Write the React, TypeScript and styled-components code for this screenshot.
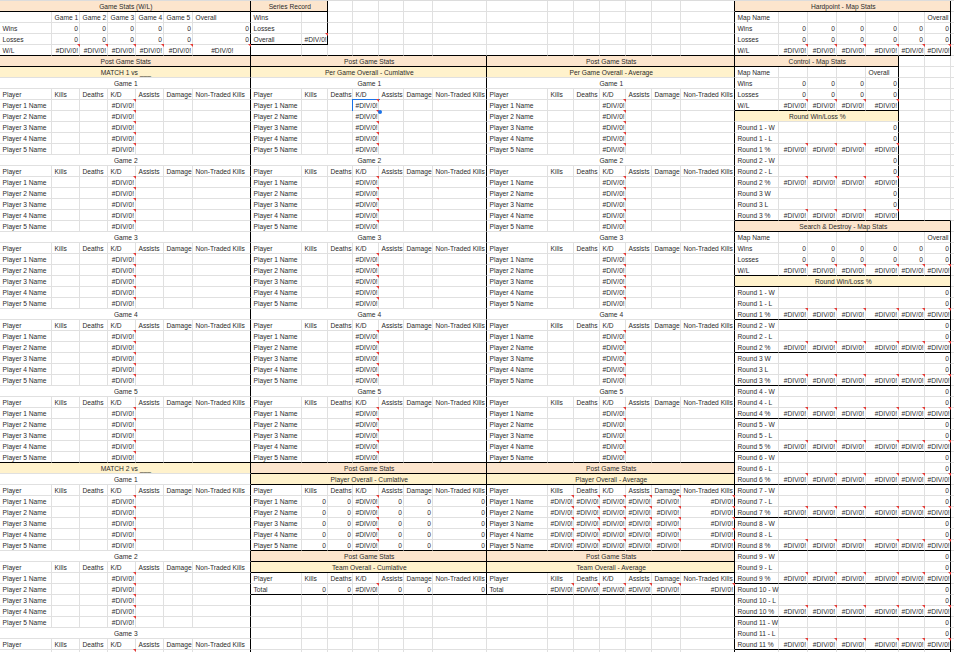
import styled, { createGlobalStyle } from "styled-components";

type Fill = "peach" | "cream";
type Align = "left" | "center" | "right";

type CellDef = {
  text?: string;
  span?: number;
  align?: Align;
  fill?: Fill;
  selected?: boolean;
};

const DIV = "#DIV/0!";
const ROW_COUNT = 60;
const COL_WIDTHS = [52, 28, 28, 28, 28, 29, 58, 51, 26, 25, 26, 25, 29, 54, 61, 26, 26, 26, 26, 29, 54, 44, 29, 29, 29, 33, 26, 26, 30];
const FILLS = { peach: "#fce5cd", cream: "#fff2cc" };

const grid: (CellDef | null)[][] = Array.from({ length: ROW_COUNT }, () =>
  COL_WIDTHS.map(() => ({}))
);

const put = (row: number, col: number, def: CellDef) => {
  // the last game block runs past the bottom of the window
  if (row >= ROW_COUNT) return;
  grid[row][col] = def;
  for (let i = 1; i < (def.span ?? 1); i++) grid[row][col + i] = null;
};

const title = (row: number, col: number, span: number, text: string, fill?: Fill) =>
  put(row, col, { text, span, fill, align: "center" });

const STAT_HEADERS = ["Kills", "Deaths", "K/D", "Assists", "Damage", "Non-Traded Kills"];

const statHeader = (row: number, col: number) => {
  put(row, col, { text: "Player" });
  STAT_HEADERS.forEach((text, i) => put(row, col + 1 + i, { text }));
};

const right = (row: number, col: number, text: string) => put(row, col, { text, align: "right" });

// one "Game n" block: title, header row and five players with only K/D filled in
const gameBlock = (row: number, col: number, game: number) => {
  title(row, col, 7, `Game ${game}`);
  statHeader(row + 1, col);
  for (let p = 1; p <= 5; p++) {
    put(row + 1 + p, col, { text: `Player ${p} Name` });
    right(row + 1 + p, col + 3, DIV);
  }
};

const summaryRow = (row: number, col: number, label: string, average: boolean) => {
  put(row, col, { text: label });
  for (let i = 1; i <= 6; i++) {
    right(row, col + i, average || i === 3 ? DIV : "0");
  }
};

const mapStats = (row: number, count: number) => {
  put(row, 21, { text: "Map Name" });
  put(row, 21 + count, { text: "Overall" });
  ["Wins", "Losses", "W/L"].forEach((label, i) => {
    put(row + 1 + i, 21, { text: label });
    for (let c = 1; c <= count; c++) right(row + 1 + i, 21 + c, i === 2 ? DIV : "0");
  });
};

const roundRows = (row: number, round: number, count: number, plain: boolean) => {
  const dash = plain ? " " : " - ";
  put(row, 21, { text: `Round ${round}${dash}W` });
  right(row, 21 + count, "0");
  put(row + 1, 21, { text: `Round ${round}${dash}L` });
  right(row + 1, 21 + count, "0");
  put(row + 2, 21, { text: `Round ${round} %` });
  for (let c = 1; c <= count; c++) right(row + 2, 21 + c, DIV);
};

// top summary
title(0, 0, 7, "Game Stats (W/L)", "peach");
title(0, 7, 2, "Series Record", "peach");
[1, 2, 3, 4, 5].forEach((g) => put(1, g, { text: `Game ${g}` }));
put(1, 6, { text: "Overall" });
["Wins", "Losses"].forEach((label, i) => {
  put(2 + i, 0, { text: label });
  for (let c = 1; c <= 6; c++) right(2 + i, c, "0");
});
put(4, 0, { text: "W/L" });
for (let c = 1; c <= 5; c++) right(4, c, DIV);
put(4, 6, { text: DIV, align: "center" });
put(1, 7, { text: "Wins" });
put(2, 7, { text: "Losses" });
put(3, 7, { text: "Overall" });
right(3, 8, DIV);

// three stat columns
title(5, 0, 7, "Post Game Stats", "peach");
title(5, 7, 7, "Post Game Stats", "peach");
title(5, 14, 7, "Post Game Stats", "peach");
title(6, 0, 7, "MATCH 1 vs ___", "cream");
title(6, 7, 7, "Per Game Overall - Cumlative", "cream");
title(6, 14, 7, "Per Game Overall - Average", "cream");
[0, 7, 14].forEach((col) => {
  [1, 2, 3, 4, 5].forEach((g) => gameBlock(7 + (g - 1) * 7, col, g));
});
grid[9][10] = { ...grid[9][10], selected: true };

title(42, 0, 7, "MATCH 2 vs ___", "cream");
gameBlock(43, 0, 1);
gameBlock(50, 0, 2);
gameBlock(57, 0, 3);

[
  { col: 7, suffix: "Cumlative", average: false },
  { col: 14, suffix: "Average", average: true },
].forEach(({ col, suffix, average }) => {
  title(42, col, 7, "Post Game Stats", "peach");
  title(43, col, 7, `Player Overall - ${suffix}`, "cream");
  statHeader(44, col);
  for (let p = 1; p <= 5; p++) summaryRow(44 + p, col, `Player ${p} Name`, average);
  title(50, col, 7, "Post Game Stats", "peach");
  title(51, col, 7, `Team Overall - ${suffix}`, "cream");
  statHeader(52, col);
  summaryRow(53, col, "Total", average);
});

// map stats on the right
title(0, 21, 7, "Hardpoint - Map Stats", "peach");
mapStats(1, 6);
title(5, 21, 5, "Control - Map Stats", "peach");
mapStats(6, 4);
title(10, 21, 5, "Round Win/Loss %", "cream");
[1, 2, 3].forEach((r) => roundRows(11 + (r - 1) * 3, r, 4, r === 3));
title(20, 21, 7, "Search  & Destroy - Map Stats", "peach");
mapStats(21, 6);
title(25, 21, 7, "Round Win/Loss %", "cream");
for (let r = 1; r <= 11; r++) roundRows(26 + (r - 1) * 3, r, 6, r === 3);
put(59, 21, { text: "Round 12 - W" });
right(59, 27, "0");

// heavy rules: [row above the line, first col, last col]
const H_RULES: [number, number, number][] = [
  [0, 0, 8], [0, 21, 27], [3, 7, 8], [4, 0, 27], [5, 0, 25], [9, 21, 25],
  [19, 21, 27], [20, 21, 27], [24, 21, 27], [25, 21, 27],
  [41, 0, 20], [42, 7, 20], [43, 7, 20], [49, 7, 20], [50, 7, 20], [51, 7, 20], [53, 7, 20],
];
for (let r = 28; r <= 58; r += 3) H_RULES.push([r, 21, 27]);

// heavy rules: [col left of the line, first row, last row]
const V_RULES: [number, number, number][] = [
  [6, 0, 59], [8, 0, 3], [13, 5, 53], [20, 0, 59], [25, 5, 19], [27, 0, 4], [27, 20, 59],
];

const hasBottomRule = (row: number, col: number) =>
  H_RULES.some(([r, from, to]) => r === row && col >= from && col <= to);

const hasRightRule = (row: number, col: number) =>
  V_RULES.some(([c, from, to]) => c === col && row >= from && row <= to);

const App = () => (
  <>
    <GlobalStyle />
    <Viewport>
      <Sheet>
        <colgroup>
          {COL_WIDTHS.map((width, i) => (
            <Column key={i} $width={width} />
          ))}
        </colgroup>
        <tbody>
          {grid.map((cells, row) => (
            <tr key={row}>
              {cells.map((cell, col) => {
                if (!cell) return null;
                const last = col + (cell.span ?? 1) - 1;
                return (
                  <Cell
                    key={col}
                    colSpan={cell.span}
                    $align={cell.align ?? "left"}
                    $fill={cell.fill}
                    $ruleBottom={hasBottomRule(row, col)}
                    $ruleRight={hasRightRule(row, last)}
                    $flag={cell.text === DIV}
                    $selected={cell.selected}
                  >
                    {cell.text}
                    {cell.selected && <FillHandle />}
                  </Cell>
                );
              })}
            </tr>
          ))}
        </tbody>
      </Sheet>
    </Viewport>
  </>
);

const GlobalStyle = createGlobalStyle`
  html, body {
    margin: 0;
    padding: 0;
    background: #fff;
    overflow: hidden;
  }
`;

const Viewport = styled.div`
  width: 954px;
  height: 652px;
  overflow: hidden;
  border-top: 1px solid #dcdcdc;
  box-sizing: border-box;
`;

const Sheet = styled.table`
  table-layout: fixed;
  width: ${COL_WIDTHS.reduce((a, b) => a + b, 0)}px;
  border-collapse: separate;
  border-spacing: 0;
  font-family: "Liberation Sans", Arial, sans-serif;
  font-size: 6.67px;
  color: #2b2b2b;
`;

const Column = styled.col<{ $width: number }>`
  width: ${(p) => p.$width}px;
`;

const Cell = styled.td<{
  $align: Align;
  $fill?: Fill;
  $ruleBottom: boolean;
  $ruleRight: boolean;
  $flag: boolean;
  $selected?: boolean;
}>`
  position: relative;
  box-sizing: border-box;
  height: 11px;
  padding: 2px 1px 0 2.5px;
  line-height: 8px;
  white-space: nowrap;
  text-align: ${(p) => p.$align};
  background: ${(p) => (p.$fill ? FILLS[p.$fill] : "#fff")};
  border-right: 1px solid ${(p) => (p.$ruleRight ? "#000" : "#e0e0e0")};
  border-bottom: 1px solid ${(p) => (p.$ruleBottom ? "#000" : "#e0e0e0")};

  ${(p) =>
    p.$selected &&
    `
    outline: 1px solid #1a73e8;
    outline-offset: 0;
  `}

  ${(p) =>
    p.$flag &&
    `
    &::after {
      content: "";
      position: absolute;
      top: -1px;
      right: -1px;
      border-top: 3px solid #e53935;
      border-left: 3px solid transparent;
    }
  `}
`;

const FillHandle = styled.span`
  position: absolute;
  right: -4px;
  bottom: -4px;
  z-index: 2;
  width: 4px;
  height: 4px;
  border-radius: 50%;
  background: #1a73e8;
`;

export default App;
